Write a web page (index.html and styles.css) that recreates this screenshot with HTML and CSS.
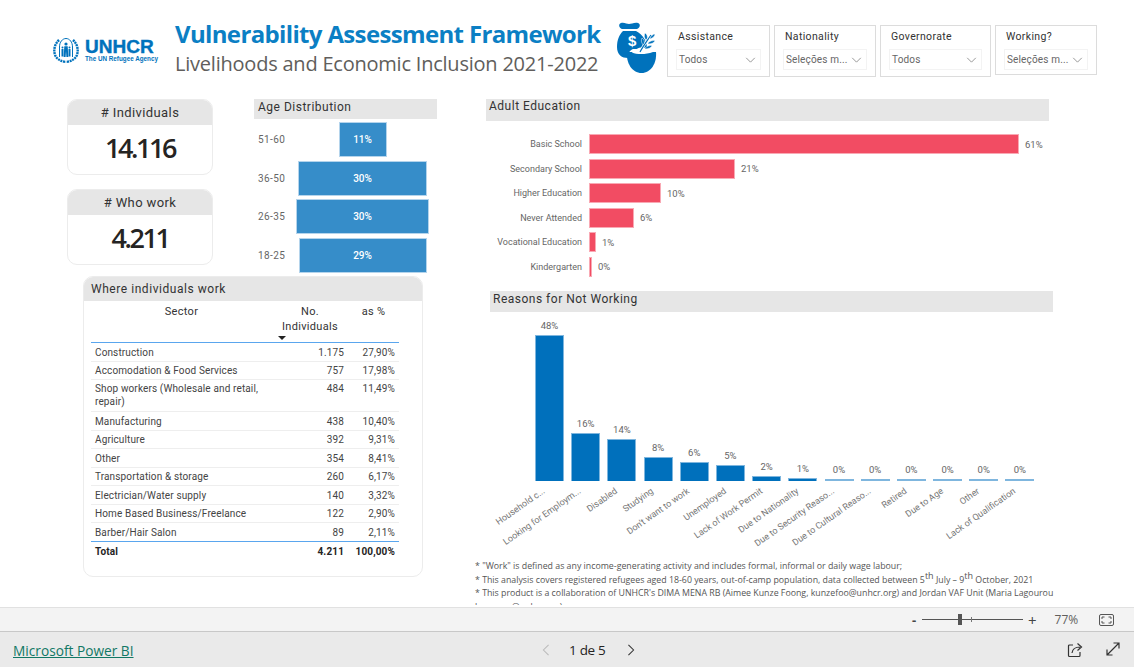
FILE: index.html
```html
<!DOCTYPE html>
<html lang="en">
<head>
<meta charset="utf-8">
<title>Vulnerability Assessment Framework</title>
<link rel="stylesheet" href="styles.css">
</head>
<body>
<main class="report">
  <header class="head">
    <svg class="logo" viewBox="0 0 112 26" width="112" height="26" aria-label="UNHCR logo">
      <g fill="none" stroke="#0072bc">
        <path d="M6 3C1.500 7 0 14 2.500 19 4 22 8 24.500 13 25" stroke-width="2.400" stroke-dasharray="2 .7"/>
        <path d="M20 3C24.500 7 26 14 23.500 19 22 22 18 24.500 13 25" stroke-width="2.400" stroke-dasharray="2 .7"/>
        <path d="M6.500 20V10C6.500 5 9.500 1.500 13 1.500S19.500 5 19.500 10V20" stroke-width="1"/>
      </g>
      <g fill="#0072bc">
        <circle cx="13" cy="7" r="1.600"/><path d="M11.300 9.200h3.400l.6 10.800h-1.900l-.4-6-.4 6h-1.900z"/>
        <circle cx="9.500" cy="10.500" r="1"/><path d="M8.500 12h2v7.500h-2z"/>
        <circle cx="16.500" cy="10.500" r="1"/><path d="M15.500 12h2v7.500h-2z"/>
      </g>
      <text class="logo-main" x="32" y="16">UNHCR</text>
      <text class="logo-sub" x="32" y="24">The UN Refugee Agency</text>
    </svg>
    <div class="titles">
      <h1 class="title">Vulnerability Assessment Framework</h1>
      <p class="subtitle">Livelihoods and Economic Inclusion 2021-2022</p>
    </div>
    <svg class="bag" viewBox="0 0 40 52" width="40" height="52" aria-hidden="true">
      <path fill="#0072bc" d="M4 1c3-1 6 1 8 1s6-2 9-1c3 1 2 5-1 6H5C2 6 1 2 4 1z"/>
      <path fill="#0072bc" d="M6 9h13c7 4 11 10 11 17v1H16c-3 1-5 4-5 9-6 0-11-3-11-11C0 18 2 13 6 9z"/>
      <path fill="#0072bc" d="M10 30h29c1 11-5 21-14.500 21S9 41 10 30z"/>
      <path fill="#fff" d="M15 30.500c2-3 7-5 10-5 4 0 9 2 11 4.500-4 1.500-8 2-11.500 2-4 0-7-.5-9.500-1.500z"/>
      <path d="M23 30c3-6 7-11 11-17" stroke="#fff" stroke-width="2.600" fill="none"/>
      <path d="M23 30c3-6 7-11 11-17" stroke="#0072bc" stroke-width="1.200" fill="none"/>
      <path fill="#0072bc" stroke="#fff" stroke-width=".5" d="M26 23c-2-3-2-5-1-7 2 1 3 4 2 6zM29 18c-2-2-2-5-1-7 2 1 3 4 2 6zM28 26c2-2 5-3 7-2-1 2-4 3-7 3zM31 21c2-2 5-3 7-2-1 2-4 3-7 3zM33 16c1-2 3-4 5-4 0 2-2 4-5 5z"/>
      <text class="bag-s" x="11" y="24">$</text>
    </svg>
    <div class="slicers">
      <div class="slicer s-a"><span class="s-label">Assistance</span><div class="s-box"><span>Todos</span><svg class="chev" viewBox="0 0 12 7" width="11" height="6"><path d="M1 1l5 5 5-5"/></svg></div></div>
      <div class="slicer s-b"><span class="s-label">Nationality</span><div class="s-box"><span>Seleções m...</span><svg class="chev" viewBox="0 0 12 7" width="11" height="6"><path d="M1 1l5 5 5-5"/></svg></div></div>
      <div class="slicer s-c"><span class="s-label">Governorate</span><div class="s-box"><span>Todos</span><svg class="chev" viewBox="0 0 12 7" width="11" height="6"><path d="M1 1l5 5 5-5"/></svg></div></div>
      <div class="slicer s-d"><span class="s-label">Working?</span><div class="s-box"><span>Seleções m...</span><svg class="chev" viewBox="0 0 12 7" width="11" height="6"><path d="M1 1l5 5 5-5"/></svg></div></div>
    </div>
  </header>

  <div class="content">
    <div class="left">
      <div class="top">
        <div class="kpis">
          <section class="kpi"><h2 class="kpi-h"># Individuals</h2><div class="kpi-v">14.116</div></section>
          <section class="kpi"><h2 class="kpi-h"># Who work</h2><div class="kpi-v">4.211</div></section>
        </div>
        <section class="age">
          <h2 class="bar-title">Age Distribution</h2>
          <div class="age-rows">
            <div class="age-row"><span class="age-l">51-60</span><div class="age-t"><div class="age-b" style="width:48px">11%</div></div></div>
            <div class="age-row"><span class="age-l">36-50</span><div class="age-t"><div class="age-b" style="width:129px">30%</div></div></div>
            <div class="age-row"><span class="age-l">26-35</span><div class="age-t"><div class="age-b" style="width:133px">30%</div></div></div>
            <div class="age-row"><span class="age-l">18-25</span><div class="age-t"><div class="age-b" style="width:128px">29%</div></div></div>
          </div>
        </section>
      </div>
      <section class="where">
        <h2 class="where-h">Where individuals work</h2>
        <table class="tbl">
          <colgroup><col class="c1"><col class="c2"><col class="c3"></colgroup>
          <thead><tr><th>Sector</th><th class="sort">No. Individuals<span class="tri"></span></th><th>as %</th></tr></thead>
          <tbody>
            <tr><td>Construction</td><td>1.175</td><td>27,90%</td></tr>
            <tr><td>Accomodation &amp; Food Services</td><td>757</td><td>17,98%</td></tr>
            <tr class="tall"><td>Shop workers (Wholesale and retail, repair)</td><td>484</td><td>11,49%</td></tr>
            <tr><td>Manufacturing</td><td>438</td><td>10,40%</td></tr>
            <tr><td>Agriculture</td><td>392</td><td>9,31%</td></tr>
            <tr><td>Other</td><td>354</td><td>8,41%</td></tr>
            <tr><td>Transportation &amp; storage</td><td>260</td><td>6,17%</td></tr>
            <tr><td>Electrician/Water supply</td><td>140</td><td>3,32%</td></tr>
            <tr><td>Home Based Business/Freelance</td><td>122</td><td>2,90%</td></tr>
            <tr><td>Barber/Hair Salon</td><td>89</td><td>2,11%</td></tr>
          </tbody>
          <tfoot><tr><td>Total</td><td>4.211</td><td>100,00%</td></tr></tfoot>
        </table>
      </section>
    </div>

    <div class="right">
      <section class="edu">
        <h2 class="bar-title wide">Adult Education</h2>
        <div class="edu-rows">
          <div class="edu-row"><span class="edu-l">Basic School</span><div class="edu-b" style="width:430px"></div><span class="edu-v">61%</span></div>
          <div class="edu-row"><span class="edu-l">Secondary School</span><div class="edu-b" style="width:146px"></div><span class="edu-v">21%</span></div>
          <div class="edu-row"><span class="edu-l">Higher Education</span><div class="edu-b" style="width:72px"></div><span class="edu-v">10%</span></div>
          <div class="edu-row"><span class="edu-l">Never Attended</span><div class="edu-b" style="width:45px"></div><span class="edu-v">6%</span></div>
          <div class="edu-row"><span class="edu-l">Vocational Education</span><div class="edu-b" style="width:7px"></div><span class="edu-v">1%</span></div>
          <div class="edu-row"><span class="edu-l">Kindergarten</span><div class="edu-b" style="width:3px"></div><span class="edu-v">0%</span></div>
        </div>
      </section>
      <section class="reasons">
        <h2 class="bar-title wide2">Reasons for Not Working</h2>
        <div class="cols">
          <div class="col"><span class="col-v">48%</span><div class="col-b" style="height:146px"></div><div class="col-lw"><span class="col-l">Household c...</span></div></div>
          <div class="col"><span class="col-v">16%</span><div class="col-b" style="height:48px"></div><div class="col-lw"><span class="col-l">Looking for Employm...</span></div></div>
          <div class="col"><span class="col-v">14%</span><div class="col-b" style="height:42px"></div><div class="col-lw"><span class="col-l">Disabled</span></div></div>
          <div class="col"><span class="col-v">8%</span><div class="col-b" style="height:24px"></div><div class="col-lw"><span class="col-l">Studying</span></div></div>
          <div class="col"><span class="col-v">6%</span><div class="col-b" style="height:19px"></div><div class="col-lw"><span class="col-l">Don't want to work</span></div></div>
          <div class="col"><span class="col-v">5%</span><div class="col-b" style="height:16px"></div><div class="col-lw"><span class="col-l">Unemployed</span></div></div>
          <div class="col"><span class="col-v">2%</span><div class="col-b" style="height:5px"></div><div class="col-lw"><span class="col-l">Lack of Work Permit</span></div></div>
          <div class="col"><span class="col-v">1%</span><div class="col-b" style="height:3px"></div><div class="col-lw"><span class="col-l">Due to Nationality</span></div></div>
          <div class="col"><span class="col-v">0%</span><div class="col-b zero" style="height:2px"></div><div class="col-lw"><span class="col-l">Due to Security Reaso...</span></div></div>
          <div class="col"><span class="col-v">0%</span><div class="col-b zero" style="height:2px"></div><div class="col-lw"><span class="col-l">Due to Cultural Reaso...</span></div></div>
          <div class="col"><span class="col-v">0%</span><div class="col-b zero" style="height:2px"></div><div class="col-lw"><span class="col-l">Retired</span></div></div>
          <div class="col"><span class="col-v">0%</span><div class="col-b zero" style="height:2px"></div><div class="col-lw"><span class="col-l">Due to Age</span></div></div>
          <div class="col"><span class="col-v">0%</span><div class="col-b zero" style="height:2px"></div><div class="col-lw"><span class="col-l">Other</span></div></div>
          <div class="col"><span class="col-v">0%</span><div class="col-b zero" style="height:2px"></div><div class="col-lw"><span class="col-l">Lack of Qualification</span></div></div>
        </div>
      </section>
      <section class="notes">
        <div class="notes-text">
          <p>* "Work" is defined as any income-generating activity and includes formal, informal or daily wage labour;</p>
          <p>* This analysis covers registered refugees aged 18-60 years, out-of-camp population, data collected between 5<sup>th</sup> July – 9<sup>th</sup> October, 2021</p>
          <p>* This product is a collaboration of UNHCR's DIMA MENA RB (Aimee Kunze Foong, kunzefoo@unhcr.org) and Jordan VAF Unit (Maria Lagourou</p>
          <p>lagourou@unhcr.org)</p>
        </div>
        <div class="thumb"></div>
      </section>
    </div>
  </div>
</main>

<div class="zoombar">
  <span class="z-minus">-</span>
  <div class="z-slider"><span class="z-tick"></span><span class="z-thumb"></span></div>
  <span class="z-plus">+</span>
  <span class="z-pct">77%</span>
  <svg class="z-fit" viewBox="0 0 15 12" width="15" height="12" aria-hidden="true"><rect x=".5" y=".5" width="14" height="11" rx="1.500"/><path d="M3 5V3h2.500M12 5V3H9.500M3 7v2h2.500M12 7v2H9.500"/></svg>
</div>

<footer class="foot">
  <a class="pbi" href="#">Microsoft Power BI</a>
  <nav class="pager">
    <svg class="pg off" viewBox="0 0 8 14" width="8" height="12"><path d="M7 1L1 7l6 6"/></svg>
    <span class="pg-t">1 de 5</span>
    <svg class="pg" viewBox="0 0 8 14" width="8" height="12"><path d="M1 1l6 6-6 6"/></svg>
  </nav>
  <div class="tools">
    <svg class="tool" viewBox="0 0 16 16" width="16" height="16" aria-hidden="true"><path d="M6 3H2.500A1 1 0 0 0 1.500 4v9.500a1 1 0 0 0 1 1H12a1 1 0 0 0 1-1V10"/><path d="M5 11c.5-4 3.500-6 8-6M10.500 1.500L14.500 5l-4 3.500" stroke-width="1.500"/></svg>
    <svg class="tool" viewBox="0 0 14 14" width="14" height="14" aria-hidden="true"><path d="M1 13L13 1M7.500 1H13v5.500M1 7.500V13h5.500"/></svg>
  </div>
</footer>
</body>
</html>
```

FILE: styles.css
```css
* { box-sizing: border-box; }
html, body { margin: 0; padding: 0; }
body { width: 1134px; height: 667px; overflow: hidden; background: #fff; font-family: "Roboto", "Liberation Sans", sans-serif; color: #333; }
h1, h2, p { margin: 0; font-weight: normal; }

.report { height: 607px; overflow: hidden; }

.head { display: flex; height: 99px; padding-left: 53px; }
.logo { margin-top: 37px; flex: none; }
.logo-main { font: 700 19px "Liberation Sans", sans-serif; fill: #0072bc; stroke: #0072bc; stroke-width: .4px; }
.logo-sub { font: 700 6.300px "Liberation Sans", sans-serif; fill: #0072bc; }
.titles { margin-left: 10px; width: 442px; padding-top: 17px; flex: none; }
.title { font: 700 24px/33px "Open Sans", sans-serif; color: #0b7fc4; white-space: nowrap; letter-spacing: -.65px; }
.subtitle { font: 400 20px/27px "Open Sans", sans-serif; color: #605e5c; white-space: nowrap; letter-spacing: -.22px; }
.bag { margin-top: 22px; flex: none; }
.bag-s { font: 700 15px "Liberation Sans", sans-serif; fill: #fff; }
.slicers { display: flex; margin: 25px 0 0 10px; align-items: flex-start; }
.slicer { border: 1.500px solid #dcdcdc; height: 52px; padding: 3px 4px 0 10px; flex: none; }
.s-a { width: 103px; }
.s-b { width: 102px; margin-left: 4px; }
.s-c { width: 111px; margin-left: 4px; }
.s-d { width: 102px; margin-left: 4px; height: 50px; }
.s-label { display: block; font-size: 10.500px; line-height: 15px; letter-spacing: .35px; color: #333; }
.s-box { display: flex; justify-content: space-between; align-items: center; height: 21px; margin: 5px 4px 0 -2px; padding: 0 4px 0 2px; border: 1px solid #f3f3f3; font-size: 10px; letter-spacing: .15px; color: #666; white-space: nowrap; }
.chev { flex: none; }
.chev path { fill: none; stroke: #888; stroke-width: 1; }

.content { display: flex; padding-left: 67px; }
.left { width: 419px; flex: none; }
.top { display: flex; }
.kpis { width: 146px; flex: none; display: flex; flex-direction: column; gap: 14px; }
.kpi { height: 76px; border: 1px solid #ececec; border-radius: 10px; overflow: hidden; }
.kpi-h { height: 25px; background: #e6e6e6; text-align: center; font-size: 13px; line-height: 26px; letter-spacing: .4px; color: #333; }
.kpi-v { text-align: center; font: 600 27px/46px "Open Sans", sans-serif; letter-spacing: -2.400px; color: #252423; }

.age { width: 183px; margin-left: 41px; flex: none; }
.bar-title { height: 20px; background: #e6e6e6; padding-left: 4px; font-size: 12px; line-height: 16px; letter-spacing: .5px; color: #333; }
.age-rows { display: flex; flex-direction: column; gap: 3.500px; margin-top: 3px; }
.age-row { display: flex; align-items: center; height: 35px; }
.age-l { width: 42px; padding-left: 4px; font-size: 10px; letter-spacing: .4px; color: #666; flex: none; }
.age-t { width: 133px; display: flex; justify-content: center; }
.age-b { height: 35px; background: #368dc9; border: 1px solid #b4d4ec; color: #fff; font-size: 10px; font-weight: 500; line-height: 34px; text-align: center; }

.where { width: 340px; height: 301px; margin: 3.500px 0 0 16px; border: 1px solid #ececec; border-radius: 10px; overflow: hidden; }
.where-h { height: 24px; background: #e6e6e6; padding-left: 7px; font-size: 12px; line-height: 24px; letter-spacing: .55px; color: #333; }
.tbl { width: 308px; margin-left: 7px; border-collapse: separate; border-spacing: 0; table-layout: fixed; font-size: 10px; letter-spacing: .13px; color: #444; }
.c1 { width: 181px; } .c2 { width: 76px; } .c3 { width: 51px; }
.tbl th { height: 42px; padding: 3px 0 0; vertical-align: top; font-weight: normal; font-size: 11px; line-height: 15px; letter-spacing: .3px; color: #333; text-align: center; border-bottom: 1px solid #5aa6ee; }
.sort { position: relative; padding: 3px 6px 0 !important; }
.tri { position: absolute; left: 6px; bottom: 2px; border: 4px solid transparent; border-top: 4px solid #222; border-bottom: 0; }
.tbl td { height: 18.500px; padding: 1px 4px 0; line-height: 13px; border-bottom: 1px solid #eee; text-align: right; }
.tbl td:first-child { text-align: left; }
.tall td { vertical-align: top; padding-top: 2px; height: 32px; }
.tbl tbody tr:last-child td { border-bottom: 1px solid #5aa6ee; }
.tbl tfoot td { font-weight: 700; color: #252423; border: 0; height: 19px; }

.right { width: 581px; flex: none; }
.wide { width: 563px; height: 22px; margin: 0; padding-left: 3px; line-height: 15px; }
.edu { height: 192px; }
.edu-rows { margin-top: 13px; display: flex; flex-direction: column; gap: 4.600px; }
.edu-row { display: flex; align-items: center; height: 20px; }
.edu-l { width: 96px; margin-right: 7px; text-align: right; font-size: 9px; color: #666; white-space: nowrap; flex: none; }
.edu-b { height: 20px; background: #f24c63; border: 1px solid #f9a9b4; flex: none; }
.edu-v { margin-left: 6px; font-size: 9.500px; color: #666; }

.reasons { margin-left: 4px; }
.wide2 { width: 563px; height: 21px; padding-left: 3px; }
.cols { display: flex; gap: 7.200px; height: 169px; margin-left: 45px; align-items: flex-end; }
.col { width: 29px; display: flex; flex-direction: column; align-items: center; flex: none; }
.col-v { font-size: 9.500px; line-height: 12px; color: #666; margin-bottom: 3px; }
.col-b { width: 29px; background: #0070bc; border: 1px solid #7fb6de; border-bottom: 0; }
.zero { background: #7fb6de; }
.col-lw { width: 0; height: 0; display: flex; justify-content: flex-end; }
.col-l { flex: none; margin-top: 4px; font-size: 9px; line-height: 12px; color: #777; white-space: nowrap; transform-origin: 100% 0; transform: translateX(-9px) rotate(-35deg); }

.notes { display: flex; margin: 77px 0 0 -11px; height: 47px; overflow: hidden; font: 400 8.800px/13px "Open Sans", sans-serif; color: #555; }
.notes-text { width: 596px; flex: none; padding-top: 2px; white-space: nowrap; }
.notes-text p { height: 13.500px; }
.notes sup { font-size: 9px; line-height: 0; vertical-align: 4px; }
.thumb { width: 6px; height: 37px; background: #c8c8c8; flex: none; }

.zoombar { display: flex; align-items: center; height: 24px; background: #f3f3f3; border-top: 1px solid #e1e1e1; padding-left: 912px; font-size: 12px; color: #444; }
.z-minus { font: 700 13px "Open Sans", sans-serif; width: 10px; }
.z-slider { position: relative; width: 101px; height: 1px; background: #555; }
.z-thumb { position: absolute; left: 36px; top: -5px; width: 4px; height: 11px; background: #555; }
.z-tick { position: absolute; left: 49px; top: -2px; width: 1px; height: 5px; background: #777; }
.z-plus { font: 400 15px "Open Sans", sans-serif; margin-left: 5px; }
.z-pct { margin-left: 18px; font: 400 12px "Open Sans", sans-serif; color: #605e5c; }
.z-fit { margin-left: 21px; }
.z-fit rect, .z-fit path { fill: none; stroke: #555; stroke-width: 1; }

.foot { display: flex; align-items: center; height: 36px; background: #eaeaea; border-top: 1px solid #c8c8c8; padding-left: 13px; }
.pbi { width: 529px; flex: none; margin-top: 2px; font: 400 13.700px "Open Sans", sans-serif; color: #117865; text-decoration: underline; }
.pager { display: flex; align-items: center; width: 91px; flex: none; }
.pg { flex: none; }
.pg path { fill: none; stroke: #333; stroke-width: 1.200; }
.pg.off path { stroke: #bbb; }
.pg-t { margin: 0 21px 0 19px; font: 500 13.500px "Open Sans", sans-serif; letter-spacing: -.3px; color: #252423; white-space: nowrap; }
.tools { display: flex; gap: 23px; margin-left: 434px; }
.tool path { fill: none; stroke: #333; stroke-width: 1.200; }
```
